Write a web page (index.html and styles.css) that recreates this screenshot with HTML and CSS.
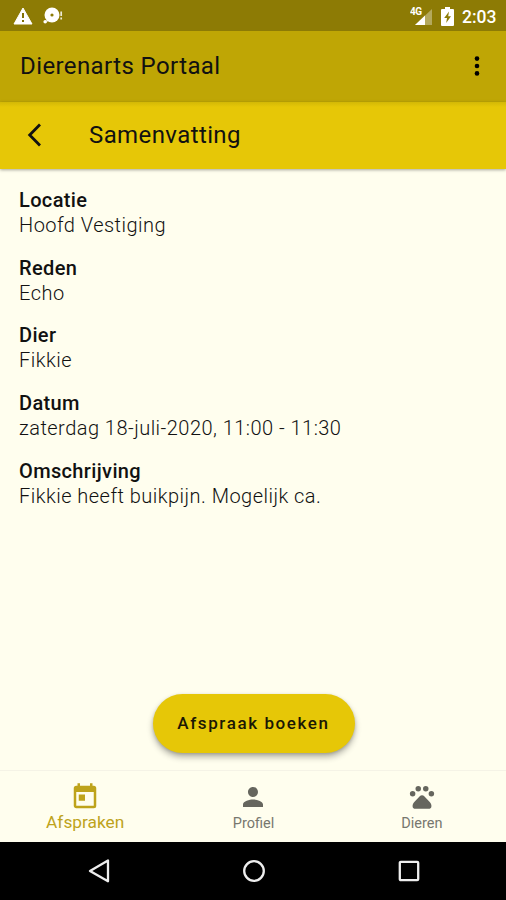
FILE: index.html
```html
<!DOCTYPE html>
<html lang="nl">
<head>
<meta charset="utf-8">
<title>Dierenarts Portaal</title>
<link rel="stylesheet" href="styles.css">
</head>
<body>
<div class="status">
  <div class="status-left">
    <svg width="20" height="18" viewBox="0 0 20 18"><path d="M10 1 19 17H1Z" fill="#fff" stroke="#fff" stroke-linejoin="round"/><path d="M10 6v5M10 13v2" stroke="#807005" stroke-width="2"/></svg>
    <svg width="20" height="18" viewBox="0 0 20 18"><circle cx="9" cy="8" r="7.5" fill="#fff"/><circle cx="9" cy="8" r="1.6" fill="#8d7b05"/><circle cx="2.2" cy="14.7" r="1.8" fill="#fff"/><path d="m4 14 3-3" stroke="#fff" stroke-width="2"/><path d="M18.2 4.5v4.5M18.2 10.5v2" stroke="#fff" stroke-width="1.7" opacity=".85"/></svg>
  </div>
  <div class="status-right">
    <svg width="23" height="19" viewBox="0 0 23 19"><path d="M22 2v16H5Z" fill="#fff" opacity=".35"/><path d="M15 8.6V18H5Z" fill="#fff"/><text class="network" x="0" y="8">4G</text></svg>
    <svg class="battery" width="13" height="19" viewBox="0 0 13 19"><path d="M4 0h5v2h3a1 1 0 0 1 1 1v15a1 1 0 0 1-1 1H1a1 1 0 0 1-1-1V3a1 1 0 0 1 1-1h3Z" fill="#fff"/><path d="M8 4.5 3.2 11H6l-.8 5L10 9.3H7.2Z" fill="#8d7b05"/></svg>
    <span class="clock">2:03</span>
  </div>
</div>
<header class="appbar">
  <h1>Dierenarts Portaal</h1>
  <svg width="6" height="20" viewBox="0 0 6 20"><circle cx="3" cy="2.6" r="2.3"/><circle cx="3" cy="10" r="2.3"/><circle cx="3" cy="17.4" r="2.3"/></svg>
</header>
<div class="subbar">
  <svg width="15" height="24" viewBox="0 0 15 24"><path d="M13 1.500 2.700 12 13 22.500" fill="none" stroke="#111" stroke-width="2.8"/></svg>
  <h2>Samenvatting</h2>
</div>
<main>
  <dl>
    <div class="field"><dt>Locatie</dt><dd>Hoofd Vestiging</dd></div>
    <div class="field"><dt>Reden</dt><dd>Echo</dd></div>
    <div class="field"><dt>Dier</dt><dd>Fikkie</dd></div>
    <div class="field"><dt>Datum</dt><dd>zaterdag 18-juli-2020, 11:00 - 11:30</dd></div>
    <div class="field"><dt>Omschrijving</dt><dd>Fikkie heeft buikpijn. Mogelijk ca.</dd></div>
  </dl>
  <button class="book">Afspraak boeken</button>
</main>
<nav class="tabs">
  <a class="tab active">
    <svg width="30" height="30" viewBox="0 0 24 24"><path d="M19 3h-1V1h-2v2H8V1H6v2H5a2 2 0 0 0-2 2v14c0 1.100.9 2 2 2h14a2 2 0 0 0 2-2V5a2 2 0 0 0-2-2Zm0 16H5V8h14ZM7 10h5v5H7Z"/></svg>
    <span>Afspraken</span>
  </a>
  <a class="tab">
    <svg width="30" height="30" viewBox="0 0 24 24"><path d="M12 12c2.210 0 4-1.790 4-4s-1.790-4-4-4-4 1.790-4 4 1.790 4 4 4Zm0 2c-2.670 0-8 1.340-8 4v2h16v-2c0-2.660-5.330-4-8-4Z"/></svg>
    <span>Profiel</span>
  </a>
  <a class="tab">
    <svg width="30" height="30" viewBox="0 0 24 24"><circle cx="4.500" cy="9.300" r="2.200"/><circle cx="9" cy="5.300" r="2.200"/><circle cx="15" cy="5.300" r="2.200"/><circle cx="19.500" cy="9.300" r="2.200"/><path d="M17.600 15.300 14 11.500c-1.200-1.200-2.800-1.200-4 0l-3.600 3.800c-1.300 1.300-2.200 2.800-1.900 4.400.2 1.100 1 1.600 2.100 1.600h10.800c1.100 0 1.900-.5 2.100-1.600.3-1.600-.6-3.100-1.900-4.400Z"/></svg>
    <span>Dieren</span>
  </a>
</nav>
<div class="system">
  <svg width="22" height="24" viewBox="0 0 22 24"><path d="M20 1.500v20.800L2 12Z"/></svg>
  <svg width="22" height="24" viewBox="0 0 22 24"><circle cx="11" cy="12" r="9.800"/></svg>
  <svg width="22" height="24" viewBox="0 0 22 24"><rect x="1.800" y="2.800" width="18.400" height="18.400" rx="1"/></svg>
</div>
</body>
</html>
```

FILE: styles.css
```css
* { box-sizing: border-box; }
body {
  margin: 0;
  height: 900px;
  display: flex;
  flex-direction: column;
  overflow: hidden;
  background: #fffeee;
  color: #111;
  font-family: Roboto, sans-serif;
}
svg { display: block; flex: none; }
h1, h2, dl, dd { margin: 0; }
.status {
  height: 31px;
  flex: none;
  display: flex;
  justify-content: space-between;
  padding: 0 9px 0 13px;
  background: #8d7b05;
  color: #fff;
}
.status-left, .status-right { display: flex; align-items: center; }
.status-left { gap: 10px; padding-top: 1px; }
.status-right { padding-top: 1px; }
.battery { margin-left: 8px; }
.clock { margin-left: 8px; width: 35px; font-size: 17.5px; font-weight: 500; line-height: 30px; padding-top: 1px; }
.network { font-size: 10px; font-weight: 700; fill: #fff; letter-spacing: -0.6px; }
.appbar {
  height: 71px;
  flex: none;
  display: flex;
  align-items: center;
  justify-content: space-between;
  padding: 0 26px 0 20px;
  background: #bfa605;
}
h1, h2 { font-size: 24px; font-weight: 400; line-height: 32px; padding-bottom: 1px; }
.appbar svg { margin-bottom: 2px; }
h1 { letter-spacing: 0.4px; }
h2 { letter-spacing: 0.4px; }
.subbar {
  height: 67px;
  flex: none;
  display: flex;
  align-items: center;
  gap: 47px;
  padding: 0 0 1px 27px;
  background: linear-gradient(#d3b806, #e6c707 5px);
  box-shadow: 0 1px 3px rgba(0, 0, 0, 0.35);
}
main {
  flex: 1;
  display: flex;
  flex-direction: column;
  justify-content: space-between;
  padding: 19px 19px 17px;
}
.field { height: 67.7px; }
dt, dd { font-size: 20px; }
dt { font-weight: 500; line-height: 25px; letter-spacing: 0.36px; }
dd { font-weight: 300; line-height: 24.5px; letter-spacing: 0.47px; color: #111; }
.book {
  align-self: center;
  width: 202px;
  height: 59px;
  margin-left: 1px;
  padding: 0 0 2px;
  border: 0;
  border-radius: 30px;
  background: #e6c707;
  color: #1b1704;
  box-shadow: 0 4px 6px rgba(0, 0, 0, 0.3), 0 1px 3px rgba(0, 0, 0, 0.15);
  font: 500 17px Roboto, sans-serif;
  letter-spacing: 1.6px;
  white-space: nowrap;
}
.tabs {
  height: 72px;
  flex: none;
  display: grid;
  grid-template-columns: repeat(3, 1fr);
  padding-left: 1px;
  border-top: 1px solid #f5f3e6;
}
.tab {
  display: flex;
  flex-direction: column;
  align-items: center;
  padding-top: 11px;
  color: #77776e;
  fill: #66665e;
  font-size: 14.5px;
  line-height: 24px;
}
.tab.active { color: #bea31b; fill: #bea31b; font-size: 17.3px; line-height: 20px; }
.system {
  height: 58px;
  flex: none;
  display: flex;
  justify-content: center;
  align-items: center;
  gap: 133px;
  padding-left: 1px;
  background: #000;
  fill: none;
  stroke: #eee;
  stroke-width: 2.3;
  stroke-linejoin: round;
}
```
